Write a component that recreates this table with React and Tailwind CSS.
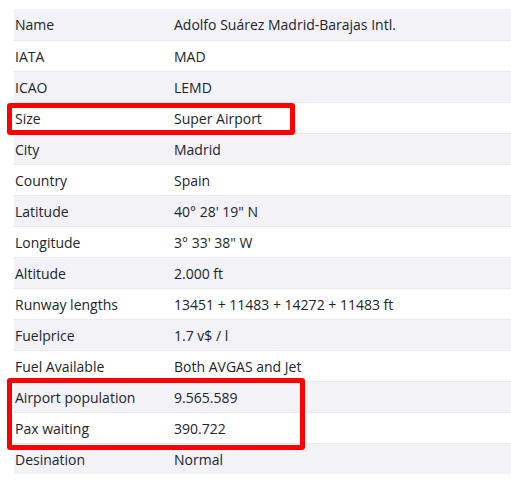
const rows = [
    ["Name", "Adolfo Suárez Madrid-Barajas Intl."],
    ["IATA", "MAD"],
    ["ICAO", "LEMD"],
    ["Size", "Super Airport"],
    ["City", "Madrid"],
    ["Country", "Spain"],
    ["Latitude", "40° 28' 19\" N"],
    ["Longitude", "3° 33' 38\" W"],
    ["Altitude", "2.000 ft"],
    ["Runway lengths", "13451 + 11483 + 14272 + 11483 ft"],
    ["Fuelprice", "1.7 v$ / l"],
    ["Fuel Available", "Both AVGAS and Jet"],
    ["Airport population", "9.565.589"],
    ["Pax waiting", "390.722"],
    ["Desination", "Normal"],
];

export default function App() {
    return (
        <div
            className="relative w-[511px] h-[497px] bg-white overflow-hidden pt-[9px] pl-[14px] text-[14px] text-[#212529]"
            style={{ fontFamily: '"Open Sans", "Noto Sans", sans-serif' }}
        >
            <div className="flex flex-col">
                {rows.map(([label, value], idx) => (
                    <div
                        key={label}
                        className={`flex items-center h-[31px] ${idx > 0 ? "border-t border-[#e9e9ee]" : ""} ${idx % 2 === 0 ? "bg-[#f2f2f7]" : "bg-white"}`}
                    >
                        <div className="w-[160px] pl-[1px]">{label}</div>
                        <div>{value}</div>
                    </div>
                ))}
            </div>

            {/* highlight boxes */}
            <div className="absolute left-[7px] top-[103px] w-[288px] h-[32px] border-[5px] border-[#ff0000] rounded-[3px]"></div>
            <div className="absolute left-[7px] top-[378px] w-[298px] h-[72px] border-[5px] border-[#ff0000] rounded-[3px]"></div>
        </div>
    )
}
